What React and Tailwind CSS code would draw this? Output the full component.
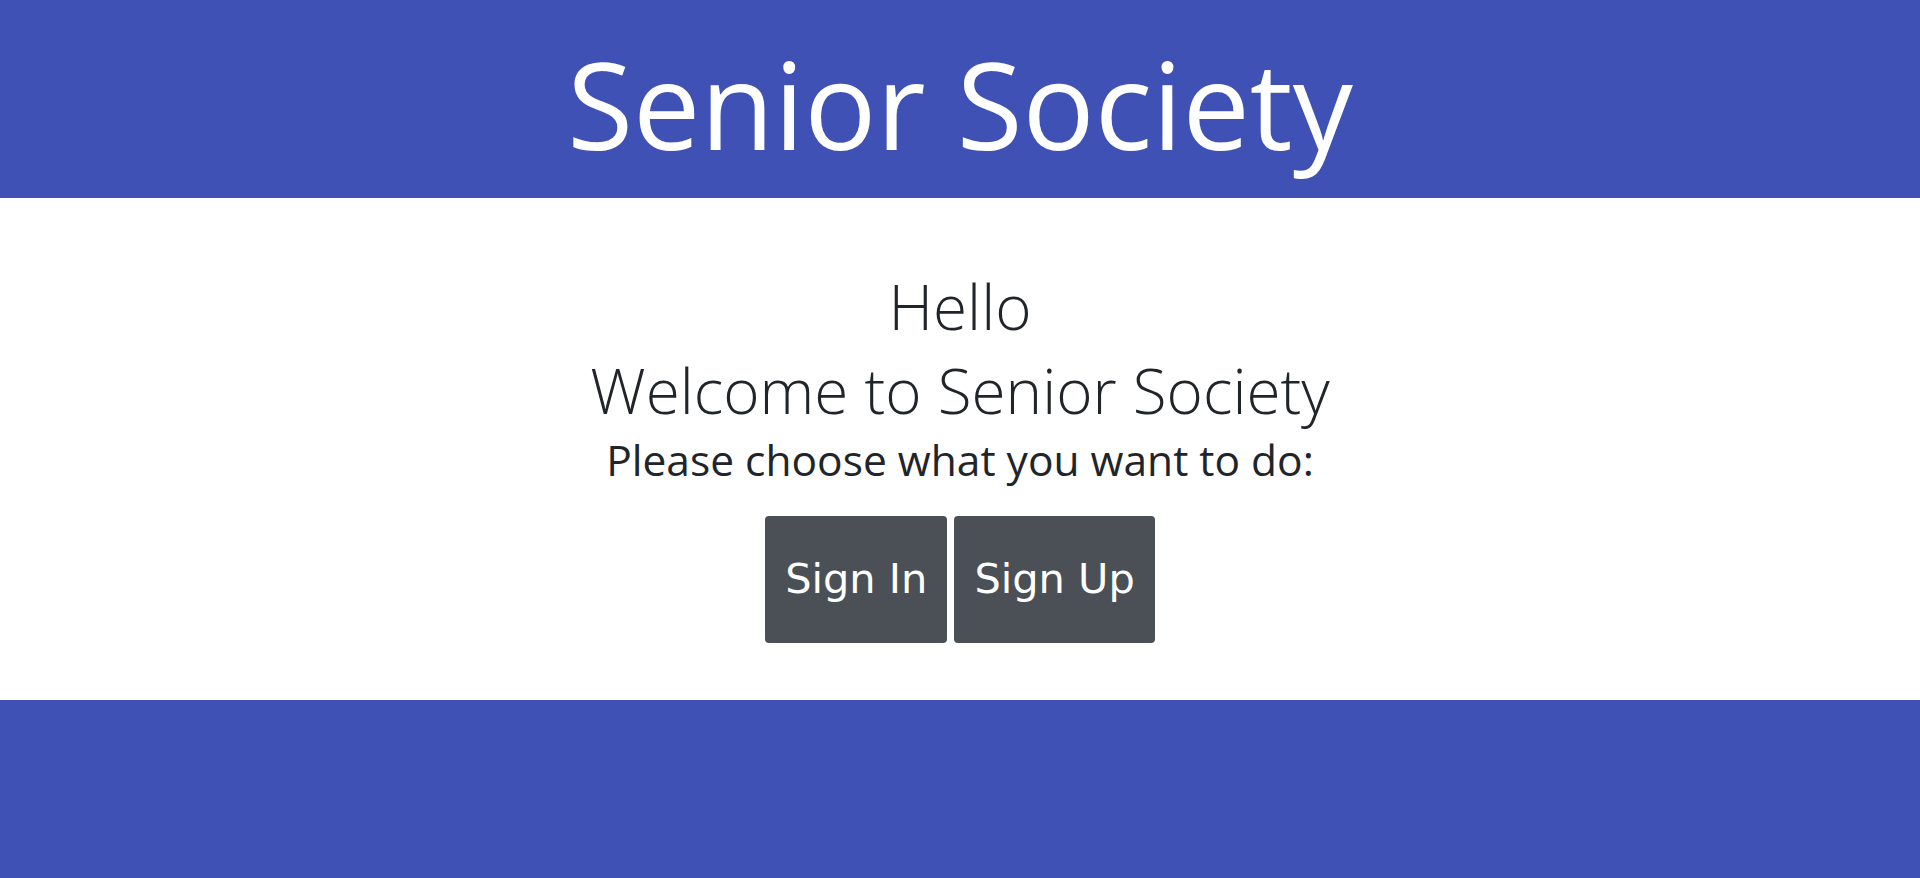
import React from "react";

function Header() {
  return (
    <header className="h-[198px] bg-[#3f51b5] flex items-center justify-center">
      <h1 className="text-white text-[120px] leading-none font-['Open_Sans',sans-serif] pt-[10px]">
        Senior Society
      </h1>
    </header>
  );
}

function Welcome() {
  return (
    <main className="h-[502px] bg-white flex flex-col items-center pt-[66px] text-[#212529] font-['Open_Sans',sans-serif]">
      <p className="text-[62px] font-light leading-[84px]">Hello</p>
      <p className="text-[62px] font-light leading-[84px]">Welcome to Senior Society</p>
      <p className="text-[42.5px] leading-[52px] pt-[2px]">Please choose what you want to do:</p>
      <div className="flex gap-[7px] mt-[30px]">
        <button className="h-[127px] px-[20px] rounded bg-[#4a5056] text-white text-[41.5px] font-['DejaVu_Sans',sans-serif]">
          Sign In
        </button>
        <button className="h-[127px] px-[20px] rounded bg-[#4a5056] text-white text-[41.5px] font-['DejaVu_Sans',sans-serif]">
          Sign Up
        </button>
      </div>
    </main>
  );
}

export default function App() {
  return (
    <div className="min-h-[878px] flex flex-col">
      <Header />
      <Welcome />
      <footer className="flex-1 bg-[#3f51b5]"></footer>
    </div>
  );
}
